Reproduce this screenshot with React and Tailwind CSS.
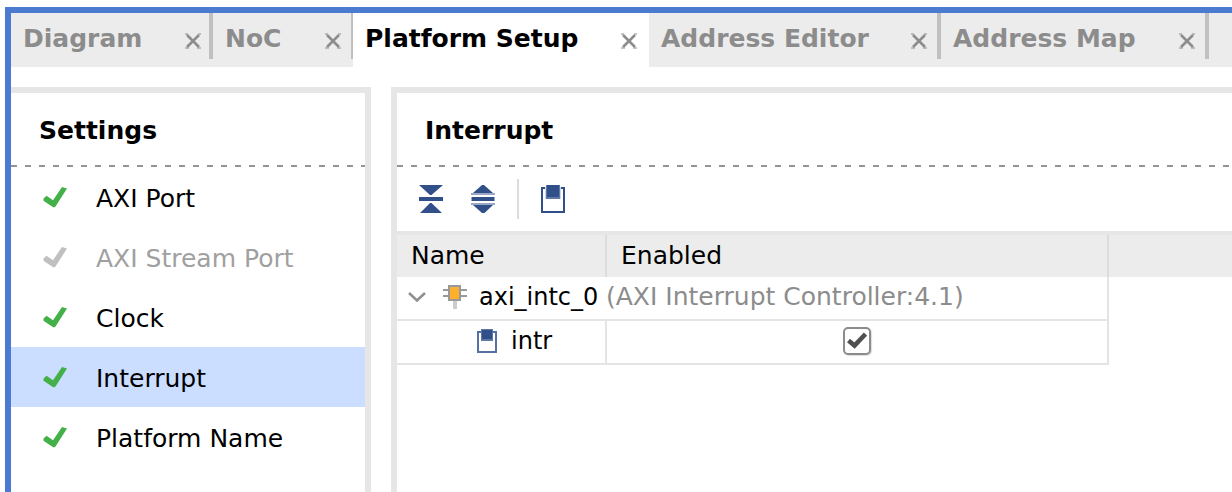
import { useState } from "react";

const TABS = [
  { name: "Diagram", width: "w-[202px]", pad: "pl-3 pr-2", edge: "w-1" },
  { name: "NoC", width: "w-[140px]", pad: "pl-3 pr-2.5", edge: "w-0.5" },
  { name: "Platform Setup", width: "w-[296px]", pad: "px-3", edge: "" },
  { name: "Address Editor", width: "w-[292px]", pad: "pl-3 pr-2.5", edge: "w-1" },
  { name: "Address Map", width: "w-[268px]", pad: "pl-3 pr-2.5", edge: "w-1" },
];

const SETTINGS = [
  { name: "AXI Port" },
  { name: "AXI Stream Port", disabled: true },
  { name: "Clock" },
  { name: "Interrupt" },
  { name: "Platform Name" },
];

function CloseIcon() {
  return (
    <svg width="16" height="16" viewBox="0 0 16 16" fill="none" stroke="currentColor" aria-hidden="true">
      <path d="M2 2 14 14M14 2 2 14" strokeWidth="2.6" />
      <path d="M0 1h3M13 1h3M0 15h4M12 15h4" strokeWidth="2" strokeOpacity=".5" />
    </svg>
  );
}

function CheckIcon() {
  return (
    <svg width="24" height="22" viewBox="0 0 24 22" fill="currentColor" aria-hidden="true">
      <path d="M0.500 11.500 3.500 8.800 10 13.200 19 0 24 1.500 12.500 19.500 11 20.500 9 19.500 0.500 13.800Z" />
    </svg>
  );
}

function CollapseIcon() {
  return (
    <svg width="24" height="28" viewBox="0 0 24 28" fill="#31508a" aria-hidden="true">
      <path d="M0 0h24L12.500 10h-1.500ZM0 12h24v4H0ZM1 28h22L12.500 18h-1.500Z" />
    </svg>
  );
}

function ExpandIcon() {
  return (
    <svg width="24" height="28" viewBox="0 0 24 28" fill="#31508a" aria-hidden="true">
      <path d="M11 0h2L22 8H2ZM1 12h22v4H1ZM2 20h20l-8.500 8h-2.500Z" />
      <path d="M0 8h24v2H0ZM0 12h24v4H0ZM0 18h24v2H0Z" opacity=".5" />
    </svg>
  );
}

function PortIcon() {
  return (
    <svg width="24" height="28" viewBox="0 0 24 28" aria-hidden="true">
      <path d="M1 3h22v24H1Z" fill="#fff" stroke="#31508a" strokeWidth="2" />
      <path d="M4 2h16v12H4Z" fill="#cdd6e4" />
      <path d="M5 0h14v14H5Z" fill="#5f78a5" />
      <path d="M6 0h12v12H6Z" fill="#31508a" />
    </svg>
  );
}

function SmallPortIcon() {
  return (
    <svg width="20" height="24" viewBox="0 0 20 24" aria-hidden="true">
      <path d="M1 3h18v20H1Z" fill="#fff" stroke="#5671a1" strokeWidth="2" />
      <path d="M4 0h12v12H4Z" fill="#5f78a5" />
      <path d="M5 1h10v9H5Z" fill="#31508a" />
    </svg>
  );
}

function ChipIcon() {
  return (
    <svg width="24" height="24" viewBox="0 0 24 24" aria-hidden="true">
      <path d="M0 5h6M0 11h6M18 5h6M18 11h6" stroke="#999" strokeWidth="2" />
      <path d="M10 16h4v8h-4Z" fill="#ccc" />
      <path d="M5 0h13v16H5Z" fill="#999" />
      <path d="M7 2h9v12H7Z" fill="#ffb02a" />
      <path d="M7 2h9v2H7Z" fill="#f5b040" />
    </svg>
  );
}

function ChevronIcon() {
  return (
    <svg width="18" height="12" viewBox="0 0 18 12" fill="none" stroke="#909090" strokeWidth="2.6" aria-hidden="true">
      <path d="M1 2 9 9.500 17 2" />
    </svg>
  );
}

function DashedRule() {
  return (
    <div className="h-0.5 bg-[repeating-linear-gradient(90deg,#949494_0px,#949494_6px,transparent_6px,transparent_14px)]" />
  );
}

function PanelTitle({ children }) {
  return <h2 className="flex h-[72px] items-center pt-1 pl-7 text-[25px] font-bold">{children}</h2>;
}

function TabBar() {
  const [active, setActive] = useState("Platform Setup");
  return (
    <nav className="flex h-[54px] bg-[#ececec]">
      {TABS.map((tab) => {
        const on = tab.name === active;
        return (
          <div key={tab.name} className={`flex shrink-0 ${tab.width} ${on ? "bg-white" : ""}`}>
            <div className={`flex grow items-center justify-between text-[#8c8c8c] ${tab.pad}`}>
              <button
                type="button"
                onClick={() => setActive(tab.name)}
                className={`pb-0.5 text-[25px] font-bold whitespace-nowrap ${on ? "text-black" : ""}`}
              >
                {tab.name}
              </button>
              <button type="button" aria-label={`Close ${tab.name}`} className="pt-0.5">
                <CloseIcon />
              </button>
            </div>
            {tab.edge && <div className={`h-[46px] bg-[#c0c0c0] ${tab.edge}`} />}
          </div>
        );
      })}
    </nav>
  );
}

function Sidebar() {
  const [selected, setSelected] = useState("Interrupt");
  return (
    <aside className="w-[360px] shrink-0 border-t-6 border-r-6 border-[#e6e6e6]">
      <PanelTitle>Settings</PanelTitle>
      <DashedRule />
      <ul className="text-[25px]">
        {SETTINGS.map(({ name, disabled }) => (
          <li key={name}>
            <button
              type="button"
              disabled={disabled}
              onClick={() => setSelected(name)}
              className={`flex h-[60px] w-full items-center gap-[29px] pt-0.5 pl-8 ${
                name === selected ? "bg-[#ccdeff]" : ""
              } ${disabled ? "text-[#a0a0a0]" : ""}`}
            >
              <span className={disabled ? "text-[#c0c0c0]" : "text-[#43b049]"}>
                <CheckIcon />
              </span>
              <span className="pt-0.5">{name}</span>
            </button>
          </li>
        ))}
      </ul>
    </aside>
  );
}

function InterruptTable() {
  const [open, setOpen] = useState(true);
  return (
    <table className="w-full table-fixed border-separate border-spacing-0 border-t-4 border-[#e6e6e6] text-left">
      <colgroup>
        <col className="w-[210px]" />
        <col className="w-[502px]" />
        <col />
      </colgroup>
      <thead className="text-[25px]">
        <tr className="h-[42px] bg-[#ececec]">
          <th className="border-r-2 border-[#dcdcdc] p-0 pl-3.5 font-normal">Name</th>
          <th className="border-r-2 border-[#dcdcdc] p-0 pl-3.5 font-normal">Enabled</th>
          <td className="p-0" />
        </tr>
      </thead>
      <tbody>
        <tr className="h-11">
          <td colSpan={2} className="border-r-2 border-b-2 border-[#e4e4e4] p-0 pl-[11px]">
            <div className="flex items-center pb-0.5">
              <button type="button" aria-label="Toggle axi_intc_0" aria-expanded={open} onClick={() => setOpen(!open)}>
                <ChevronIcon />
              </button>
              <span className="pr-3 pl-[17px]">
                <ChipIcon />
              </span>
              <span className="whitespace-nowrap">
                axi_intc_0 <span className="text-[25px] text-[#8c8c8c]">(AXI Interrupt Controller:4.1)</span>
              </span>
            </div>
          </td>
          <td className="p-0" />
        </tr>
        {open && (
          <tr className="h-11">
            <td className="border-r-2 border-b-2 border-[#e4e4e4] p-0 pl-20">
              <label htmlFor="intr-enabled" className="flex items-center gap-3.5 pb-0.5">
                <SmallPortIcon />
                intr
              </label>
            </td>
            <td className="border-r-2 border-b-2 border-[#e4e4e4] p-0">
              <div className="grid place-items-center pb-0.5">
                <input
                  id="intr-enabled"
                  type="checkbox"
                  defaultChecked
                  className="peer col-start-1 row-start-1 size-7 appearance-none rounded-[5px] border-2 border-[#8c8c8c] bg-white shadow-[1px_1px_1px_#ddd]"
                />
                <svg
                  width="20"
                  height="18"
                  viewBox="0 0 20 18"
                  fill="none"
                  stroke="#505050"
                  strokeWidth="4.6"
                  className="pointer-events-none invisible col-start-1 row-start-1 peer-checked:visible"
                  aria-hidden="true"
                >
                  <path d="M1.500 8.500 7.500 13.500 18.500 2" />
                </svg>
              </div>
            </td>
            <td className="p-0" />
          </tr>
        )}
      </tbody>
    </table>
  );
}

export default function App() {
  return (
    <div className="flex min-h-screen flex-col overflow-hidden bg-white pt-[7px] pl-[5px] font-['DejaVu_Sans',sans-serif] text-[24px] leading-8 text-black">
      <div className="flex grow flex-col border-t-6 border-l-6 border-[#4a7bd0]">
        <TabBar />
        <div className="flex grow gap-5 pt-5">
          <Sidebar />
          <main className="min-w-0 grow border-t-6 border-l-6 border-[#e6e6e6]">
            <PanelTitle>Interrupt</PanelTitle>
            <DashedRule />
            <div className="flex h-16 items-center pl-[22px]">
              <button type="button" aria-label="Collapse all" className="mr-7">
                <CollapseIcon />
              </button>
              <button type="button" aria-label="Expand all">
                <ExpandIcon />
              </button>
              <div className="mx-[22px] h-10 w-0.5 bg-[#dcdcdc]" />
              <button type="button" aria-label="Show interrupt ports">
                <PortIcon />
              </button>
            </div>
            <InterruptTable />
          </main>
        </div>
      </div>
    </div>
  );
}
